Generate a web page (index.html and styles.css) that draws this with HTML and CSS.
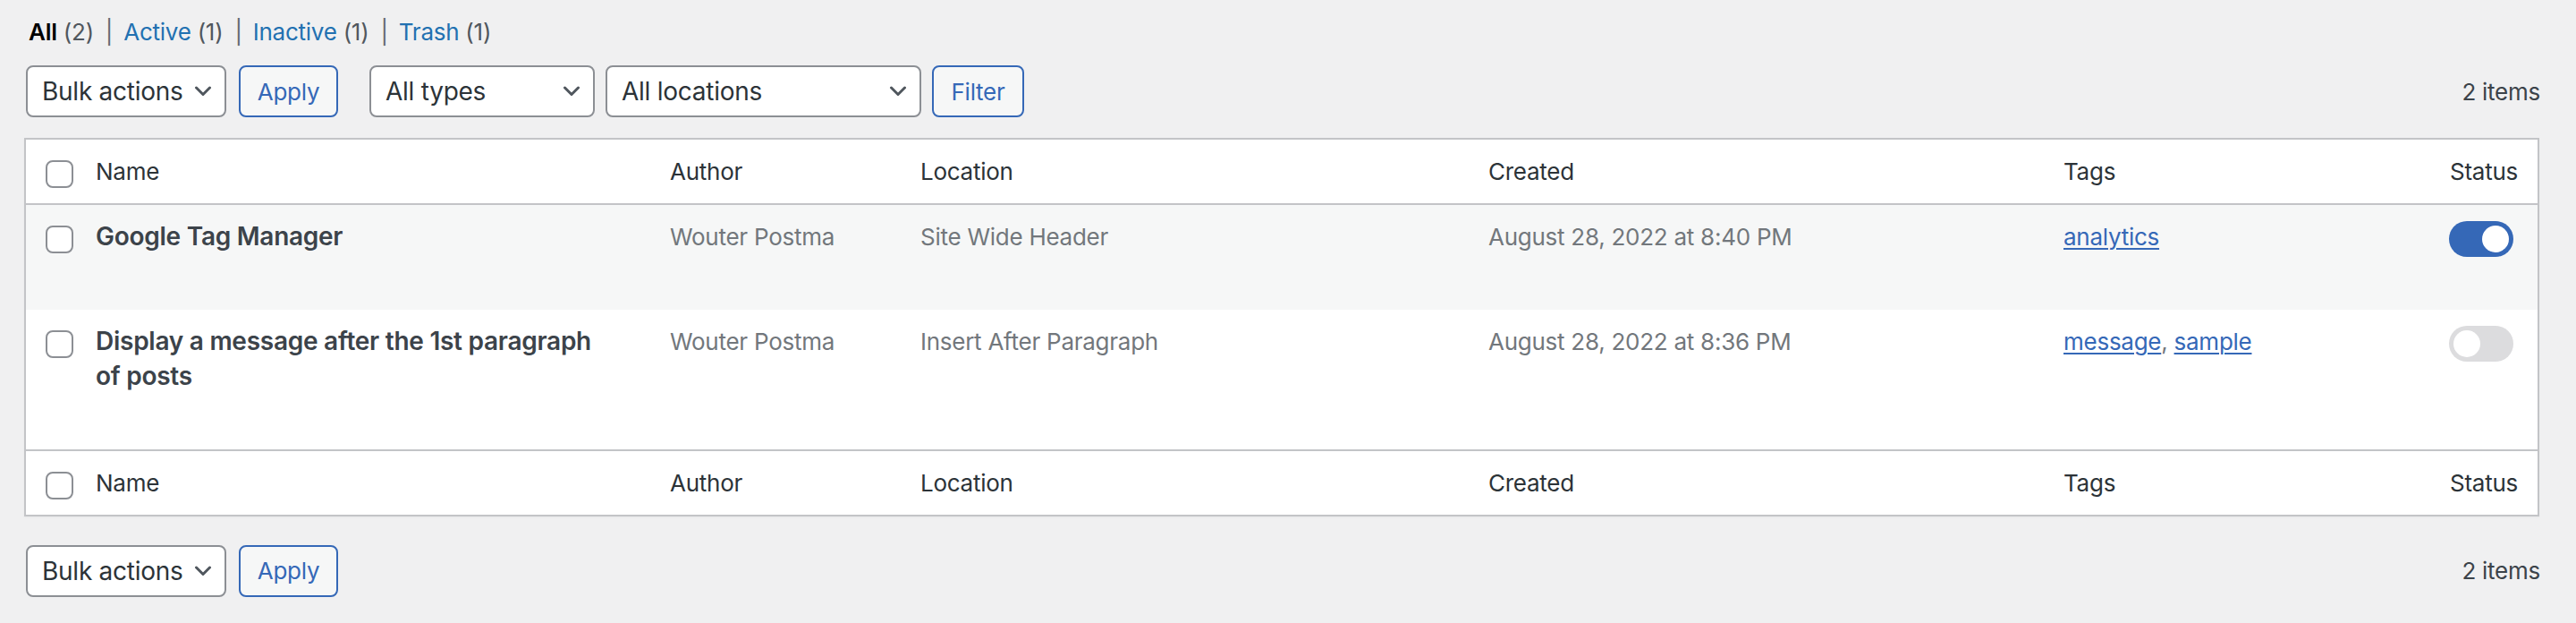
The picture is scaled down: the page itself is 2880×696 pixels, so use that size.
FILE: index.html
```html
<!DOCTYPE html>
<html lang="en">
<head>
<meta charset="utf-8">
<title>Code Snippets</title>
<link rel="stylesheet" href="styles.css">
</head>
<body>
<div class="wrap">
  <ul class="subsubsub">
    <li><span class="current">All</span> <span class="count">(2)</span><span class="sep">|</span></li>
    <li><a href="#">Active</a> <span class="count">(1)</span><span class="sep">|</span></li>
    <li><a href="#">Inactive</a> <span class="count">(1)</span><span class="sep">|</span></li>
    <li><a href="#">Trash</a> <span class="count">(1)</span></li>
  </ul>

  <div class="tablenav tablenav-top">
    <div class="actions">
      <div class="select w-bulk"><span>Bulk actions</span><svg class="chev" viewBox="0 0 20 12" width="20" height="12"><path d="M2.5 2 L10 9.5 L17.5 2"/></svg></div>
      <button class="btn w-apply">Apply</button>
    </div>
    <div class="actions filters">
      <div class="select w-types"><span>All types</span><svg class="chev" viewBox="0 0 20 12" width="20" height="12"><path d="M2.5 2 L10 9.5 L17.5 2"/></svg></div>
      <div class="select w-loc"><span>All locations</span><svg class="chev" viewBox="0 0 20 12" width="20" height="12"><path d="M2.5 2 L10 9.5 L17.5 2"/></svg></div>
      <button class="btn w-filter">Filter</button>
    </div>
    <div class="items">2 items</div>
  </div>

  <div class="list">
    <div class="row head">
      <div class="cell check"><span class="cb"></span></div>
      <div class="cell">Name</div>
      <div class="cell">Author</div>
      <div class="cell">Location</div>
      <div class="cell">Created</div>
      <div class="cell">Tags</div>
      <div class="cell status">Status</div>
    </div>
    <div class="row body alt">
      <div class="cell check"><span class="cb"></span></div>
      <div class="cell name"><strong class="title">Google Tag Manager</strong></div>
      <div class="cell data">Wouter Postma</div>
      <div class="cell data">Site Wide Header</div>
      <div class="cell data">August 28, 2022 at 8:40 PM</div>
      <div class="cell data"><a class="tag" href="#">analytics</a></div>
      <div class="cell status"><span class="toggle on"><span class="knob"></span></span></div>
    </div>
    <div class="row body">
      <div class="cell check"><span class="cb"></span></div>
      <div class="cell name"><strong class="title">Display a message after the 1st paragraph of posts</strong></div>
      <div class="cell data">Wouter Postma</div>
      <div class="cell data">Insert After Paragraph</div>
      <div class="cell data">August 28, 2022 at 8:36 PM</div>
      <div class="cell data"><a class="tag" href="#">message</a>, <a class="tag" href="#">sample</a></div>
      <div class="cell status"><span class="toggle"><span class="knob"></span></span></div>
    </div>
    <div class="row head foot">
      <div class="cell check"><span class="cb"></span></div>
      <div class="cell">Name</div>
      <div class="cell">Author</div>
      <div class="cell">Location</div>
      <div class="cell">Created</div>
      <div class="cell">Tags</div>
      <div class="cell status">Status</div>
    </div>
  </div>

  <div class="tablenav tablenav-bottom">
    <div class="actions">
      <div class="select w-bulk"><span>Bulk actions</span><svg class="chev" viewBox="0 0 20 12" width="20" height="12"><path d="M2.5 2 L10 9.5 L17.5 2"/></svg></div>
      <button class="btn w-apply">Apply</button>
    </div>
    <div class="items">2 items</div>
  </div>
</div>
</body>
</html>
```

FILE: styles.css
```css
* { box-sizing: border-box; }

html, body {
  margin: 0;
  padding: 0;
  background: #f0f0f1;
}

body {
  font-family: Inter, "Liberation Sans", sans-serif;
  font-size: 26px;
  color: #3c434a;
  letter-spacing: -0.01em;
}

.wrap {
  padding: 16px 41px 0 27px;
}

/* status filter links */
.subsubsub {
  list-style: none;
  margin: 0 0 17px 5px;
  padding: 0;
  height: 40px;
  line-height: 40px;
  display: flex;
  font-size: 26px;
}
.subsubsub li { white-space: pre; }
.subsubsub .current { color: #000; font-weight: 600; }
.subsubsub a { color: #2271b1; text-decoration: none; }
.subsubsub .count { color: #50575e; }
.subsubsub .sep { color: #646970; margin: 0 12px 0 13px; }

/* tablenav */
.tablenav {
  display: flex;
  align-items: center;
  height: 58px;
  padding-left: 2px;
}
.tablenav-top { margin-bottom: 23px; }
.tablenav-bottom { margin-top: 32px; }

.actions {
  display: flex;
  align-items: center;
  gap: 14px;
}
.filters {
  margin-left: 35px;
  gap: 12px;
}

.select {
  height: 58px;
  display: flex;
  align-items: center;
  justify-content: space-between;
  background: #fff;
  border: 2px solid #8c8f94;
  border-radius: 8px;
  padding: 0 14px 0 16px;
  font-size: 28px;
  color: #2c3338;
}
.chev {
  display: block;
  fill: none;
  stroke: #50575e;
  stroke-width: 3;
  stroke-linecap: round;
  stroke-linejoin: round;
}
.w-bulk { width: 224px; }
.w-types { width: 252px; }
.w-loc { width: 353px; }

.btn {
  height: 58px;
  background: #f6f7f7;
  border: 2px solid #3568b7;
  border-radius: 8px;
  color: #3568b7;
  font-family: inherit;
  font-size: 26px;
  letter-spacing: -0.01em;
  padding: 0;
  cursor: pointer;
}
.w-apply { width: 111px; }
.w-filter { width: 103px; }

.items {
  margin-left: auto;
  font-size: 26px;
  color: #3c434a;
  margin-right: -1px;
}

/* list table */
.list {
  border: 2px solid #c3c4c7;
  background: #fff;
  box-shadow: 0 1px 2px rgba(0, 0, 0, 0.04);
}

.row {
  display: grid;
  grid-template-columns: 58px 642px 280px 635px 643px 1fr 146px;
}
.row.head { color: #2c3338; }
.row.head:first-child { border-bottom: 2px solid #c3c4c7; }
.row.foot { border-top: 2px solid #c3c4c7; }
.row.alt { background: #f6f7f7; }

.cell {
  padding: 16px 20px;
  line-height: 39px;
}
.cell.check {
  padding: 23px 0 0 22px;
}
.cb {
  display: block;
  width: 31px;
  height: 31px;
  background: #fff;
  border: 2px solid #8c8f94;
  border-radius: 8px;
}
.cell.name {
  padding: 16px 60px 61px 20px;
}
.title {
  font-size: 28px;
  font-weight: 600;
  color: #3c434a;
  line-height: 39.5px;
}
.cell.data { color: #72777c; }
.tag {
  color: #3568b7;
  text-decoration: underline;
  text-underline-offset: 3px;
  text-decoration-thickness: 2px;
}
.cell.status {
  text-align: right;
  padding-right: 22px;
  padding-left: 0;
}

.toggle {
  display: inline-block;
  position: relative;
  vertical-align: top;
  width: 72px;
  height: 40px;
  margin-top: 2px;
  margin-right: 5px;
  border-radius: 20px;
  background: #dcdcde;
}
.toggle.on { background: #3568b7; }
.knob {
  position: absolute;
  top: 5px;
  left: 5px;
  width: 30px;
  height: 30px;
  border-radius: 50%;
  background: #fff;
}
.toggle.on .knob { left: auto; right: 5px; }
```
